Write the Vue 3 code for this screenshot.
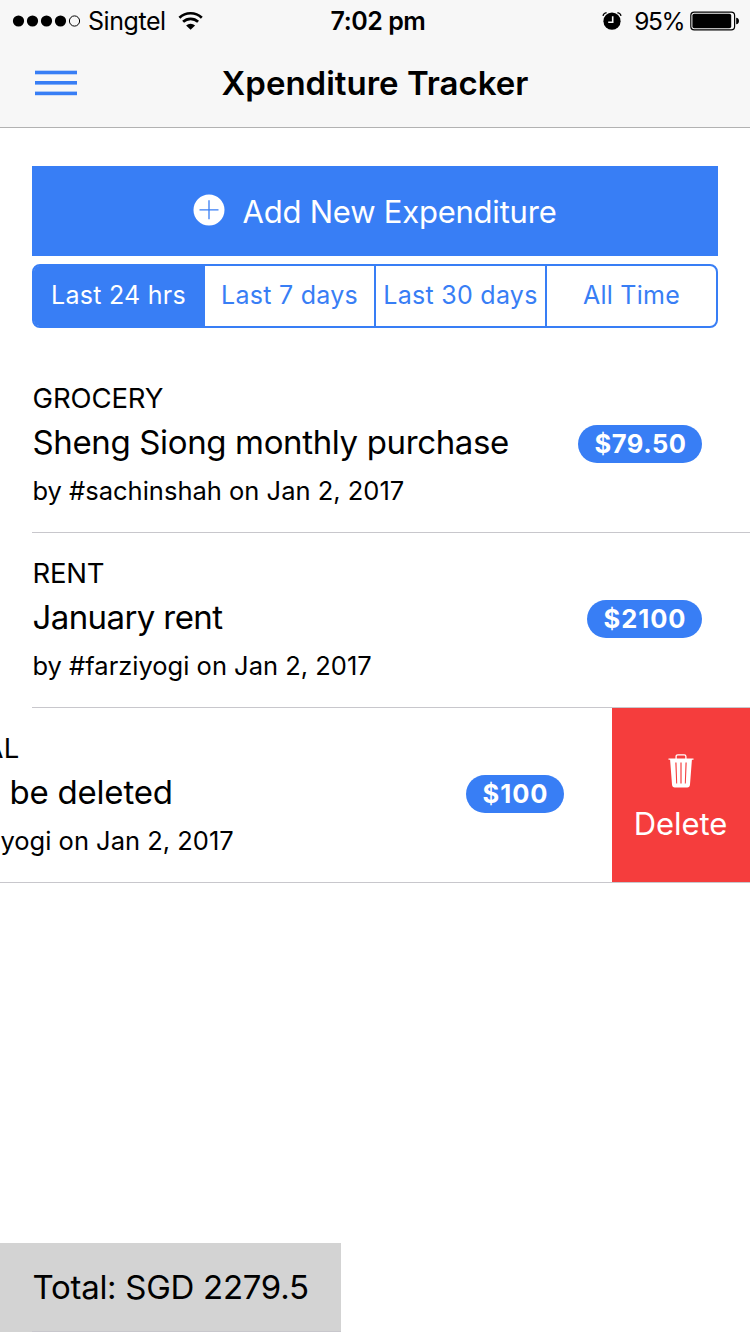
<script setup>
import { ref } from 'vue'

const periods = ['Last 24 hrs', 'Last 7 days', 'Last 30 days', 'All Time']
const active = ref(0)

// tracking: letter spacing in px for the category, title and amount
const items = [
  { category: 'GROCERY', title: 'Sheng Siong monthly purchase', by: 'by #sachinshah on Jan 2, 2017', amount: '$79.50', tracking: [-0.1, -0.36, 0.5] },
  { category: 'RENT', title: 'January rent', by: 'by #farziyogi on Jan 2, 2017', amount: '$2100', tracking: [-0.2, -0.6, 0.96] },
  { category: 'MEDICAL', title: 'Item to be deleted', by: 'by #farziyogi on Jan 2, 2017', amount: '$100', tracking: [0.35, -0.22, 0.98], open: true },
]
const spacing = (px) => ({ letterSpacing: px + 'px' })
</script>

<template>
  <main class="app">
    <header class="bar">
      <div class="status">
        <div class="side">
          <svg class="dots" width="68" height="14" viewBox="0 0 68 14">
            <circle cx="6.500" cy="7" r="5.600" /><circle cx="20.500" cy="7" r="5.600" /><circle cx="34.500" cy="7" r="5.600" /><circle cx="48.500" cy="7" r="5.600" />
            <circle cx="62.500" cy="7" r="5.100" fill="none" stroke="#000" stroke-width="1" />
          </svg>
          <span class="carrier">Singtel</span>
          <svg class="wifi" width="26" height="20" viewBox="0 0 26 20">
            <g fill="none" stroke="#000" stroke-width="2.700">
              <path d="M1.400 6.700a16.300 16.300 0 0 1 22.400 0" />
              <path d="M5.100 10.800a10.900 10.900 0 0 1 15 0" />
            </g>
            <path d="M8.100 14.400a6.600 6.600 0 0 1 9 0L12.600 18.800z" />
          </svg>
        </div>
        <span class="time">7:02 pm</span>
        <div class="side right">
          <svg class="alarm" width="20" height="20" viewBox="0 0 20 20">
            <circle cx="10" cy="10.200" r="8.600" />
            <path d="M1 4.800Q1.600 2.200 4.600 1.700M15.400 1.700Q18.400 2.200 19 4.800" fill="none" stroke="#000" stroke-width="1.300" />
            <path d="M10.700 5.200v6H6.200" fill="none" stroke="#f7f7f7" stroke-width="1.600" />
          </svg>
          <span class="percent">95%</span>
          <svg class="battery" width="50" height="20" viewBox="0 0 50 20">
            <rect x=".8" y="1.100" width="43.800" height="17.800" rx="3.400" fill="none" stroke="#000" stroke-width="1.200" />
            <rect x="2.400" y="2.700" width="38.800" height="14.600" rx="1.800" />
            <path d="M46.200 6.700c1.700.2 2.800 1.600 2.800 3.300s-1.100 3.100-2.800 3.300z" />
          </svg>
        </div>
      </div>
      <div class="nav">
        <svg class="menu" width="42" height="28" viewBox="0 0 42 28">
          <rect y="1.700" width="42" height="3.600" /><rect y="12" width="42" height="3.600" /><rect y="22.600" width="42" height="3.600" />
        </svg>
        <h1>Xpenditure Tracker</h1>
      </div>
    </header>

    <section class="controls">
      <button class="add">
        <svg width="32" height="32" viewBox="0 0 32 32">
          <circle cx="16" cy="16" r="15.500" fill="#fff" />
          <path d="M6.500 15.800h19M16 6.300v19" fill="none" stroke="#387ef5" stroke-width="1.300" />
        </svg>
        <span>Add New Expenditure</span>
      </button>
      <div class="segments">
        <button v-for="(p, i) in periods" :key="p" :class="{ on: i === active }" @click="active = i">{{ p }}</button>
      </div>
    </section>

    <ul class="list">
      <li v-for="item in items" :key="item.title" :class="{ open: item.open }">
        <article>
          <div class="text">
            <p class="category" :style="spacing(item.tracking[0])">{{ item.category }}</p>
            <h2 :style="spacing(item.tracking[1])">{{ item.title }}</h2>
            <p class="by">{{ item.by }}</p>
          </div>
          <span class="badge" :style="spacing(item.tracking[2])">{{ item.amount }}</span>
        </article>
        <button v-if="item.open" class="delete">
          <svg width="26" height="34" viewBox="0 0 26 34">
            <path d="M8.100 5V2.600Q8.100.9 9.800.9h6.400q1.700 0 1.700 1.700V5" fill="none" stroke="#fff" stroke-width="1.300" />
            <path fill="#fff" fill-rule="evenodd" d="M.5 4.400h25v1.400h-1.600L22 30.500q-.2 2.900-2.800 2.900H6.800Q4.200 33.400 4 30.500L2.100 5.800H.5zM7.300 8.500 8.200 29.500h1L8.500 8.500zM12.400 8.500v21h1.200v-21zM17.500 8.500 16.800 29.500h1L18.700 8.500z" />
          </svg>
          <span>Delete</span>
        </button>
      </li>
    </ul>

    <footer class="total">Total: SGD 2279.5</footer>
  </main>
</template>

<style>
body { background: #fff; }
</style>

<style scoped>
.app { box-sizing: border-box; width: 750px; height: 1334px; padding-bottom: 2px; display: flex; flex-direction: column; overflow: hidden; background: #fff; color: #000; font-family: Inter, "Liberation Sans", sans-serif; white-space: nowrap; }
button { border: 0; padding: 0; margin: 0; font: inherit; letter-spacing: inherit; color: inherit; background: none; }
svg { display: block; flex: none; }
h1, h2, p, ul { margin: 0; padding: 0; font-weight: 400; list-style: none; }

.bar { height: 127px; background: #f7f7f7; border-bottom: 1px solid #b2b2b2; }
.status { display: grid; grid-template-columns: 1fr auto 1fr; height: 41px; line-height: 41px; font-size: 25px; letter-spacing: -0.45px; padding: 0 10px 0 12px; }
.side { display: flex; align-items: center; }
.right { justify-content: flex-end; }
.carrier { margin: 1px 0 0 8px; }
.wifi { margin-left: 12px; }
.time { padding: 1px 0 0 4px; font-weight: 600; }
.percent { margin: 1px 6px 0 12.5px; font-size: 24.500px; letter-spacing: -1.5px; }
.nav { display: grid; grid-template-columns: 187px 1fr 187px; align-items: center; height: 84px; }
.menu { margin-left: 35px; fill: #387ef5; }
.nav h1 { justify-self: center; font-size: 33px; font-weight: 600; line-height: 84px; }

.controls { padding: 38px 32px 0; }
.add { display: flex; align-items: center; justify-content: center; gap: 18px; width: 100%; height: 90px; padding-right: 1px; background: #387ef5; color: #fff; font-size: 31px; letter-spacing: -0.22px; }
.add svg { margin-bottom: 3px; }
.segments { display: flex; box-sizing: border-box; height: 64px; margin-top: 8px; border: 2px solid #387ef5; border-radius: 8px; color: #387ef5; font-size: 25px; letter-spacing: 0.27px; }
.segments button { width: 171px; padding-bottom: 2px; box-sizing: border-box; border-right: 2px solid #387ef5; }
.segments button:last-child { width: 169px; border-right: 0; }
.segments .on { background: #387ef5; color: #fff; }
.segments .on:first-child { border-radius: 5px 0 0 5px; }

.list { margin-top: 30px; }
li { display: flex; height: 175px; }
article { display: flex; flex: none; width: 718px; margin-left: 32px; box-sizing: border-box; border-bottom: 1px solid #c8c7cc; padding-right: 48px; justify-content: space-between; }
.open article { margin-left: -138px; width: 750px; padding-left: 32px; }
.text { padding: 23px 0 0 0.5px; }
.category { font-size: 27.500px; line-height: 34px; }
h2 { margin-top: 7px; font-size: 33px; line-height: 40px; }
.by { margin-top: 14px; font-size: 25.500px; line-height: 30px; }
.badge { height: 38px; margin-top: 67px; padding: 0 15.5px 0 16.5px; border-radius: 19px; background: #387ef5; color: #fff; font-size: 25.500px; font-weight: 700; line-height: 38px; }
.delete { display: flex; flex-direction: column; align-items: center; width: 138px; height: 175px; padding: 46px 1px 0 0; box-sizing: border-box; border-bottom: 1px solid #c8c7cc; background: #f53d3d; color: #fff; font-size: 31px; line-height: 40px; letter-spacing: -0.1px; }
.delete svg { margin-bottom: 16px; }

.total { margin-top: auto; width: 341px; height: 89px; box-sizing: border-box; padding-left: 32.5px; background: linear-gradient(#c8c7cc, #c8c7cc) 32px 100% / 100% 1px no-repeat #d3d3d3; font-size: 33px; line-height: 88px; letter-spacing: -0.28px; }
</style>
